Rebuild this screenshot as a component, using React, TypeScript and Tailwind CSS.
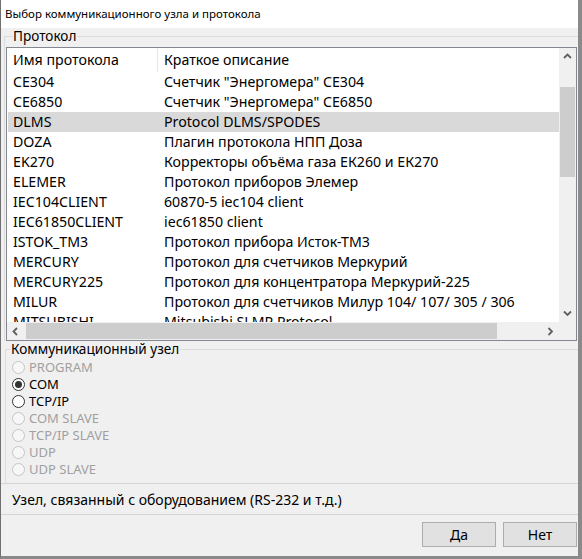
import type { ReactNode } from 'react';

type Protocol = { name: string; description: string };

const protocols: Protocol[] = [
  { name: 'CE304', description: 'Счетчик "Энергомера" CE304' },
  { name: 'CE6850', description: 'Счетчик "Энергомера" CE6850' },
  { name: 'DLMS', description: 'Protocol DLMS/SPODES' },
  { name: 'DOZA', description: 'Плагин протокола НПП Доза' },
  { name: 'EK270', description: 'Корректоры объёма газа ЕК260 и ЕК270' },
  { name: 'ELEMER', description: 'Протокол приборов Элемер' },
  { name: 'IEC104CLIENT', description: '60870-5 iec104 client' },
  { name: 'IEC61850CLIENT', description: 'iec61850 client' },
  { name: 'ISTOK_TM3', description: 'Протокол прибора Исток-ТМ3' },
  { name: 'MERCURY', description: 'Протокол для счетчиков Меркурий' },
  { name: 'MERCURY225', description: 'Протокол для концентратора Меркурий-225' },
  { name: 'MILUR', description: 'Протокол для счетчиков Милур 104/ 107/ 305 / 306' },
  { name: 'MITSUBISHI', description: 'Mitsubishi SLMP Protocol' },
];

const nodes = [
  { label: 'PROGRAM', enabled: false },
  { label: 'COM', enabled: true },
  { label: 'TCP/IP', enabled: true },
  { label: 'COM SLAVE', enabled: false },
  { label: 'TCP/IP SLAVE', enabled: false },
  { label: 'UDP', enabled: false },
  { label: 'UDP SLAVE', enabled: false },
];

/* Small scrollbar arrow, drawn as a chevron */
function Arrow({ dir }: { dir: 'up' | 'down' | 'left' | 'right' }) {
  const pts = {
    up: '1,6 4.5,2.5 8,6',
    down: '1,2.5 4.5,6 8,2.5',
    left: '6,1 2.5,4.5 6,8',
    right: '2.5,1 6,4.5 2.5,8',
  }[dir];
  return (
    <svg width="9" height="9" viewBox="0 0 9 9">
      <polyline points={pts} fill="none" stroke="#606060" strokeWidth="1.8" />
    </svg>
  );
}

function GroupLabel({ children, left }: { children: ReactNode; left: string }) {
  return (
    <span className={`absolute -top-[9px] ${left} bg-[#f0f0f0] pr-[1px] text-[13.6px] leading-[16px] text-black`}>
      {children}
    </span>
  );
}

function Radio({ checked, enabled }: { checked: boolean; enabled: boolean }) {
  return (
    <span
      className={`w-[13px] h-[13px] rounded-full border flex items-center justify-center ${
        enabled ? 'border-[#333333] bg-white' : 'border-[#c5c5c5] bg-[#f7f7f7]'
      }`}
    >
      {checked && <span className="w-[7px] h-[7px] rounded-full bg-[#333333]" />}
    </span>
  );
}

export default function App() {
  const selected = 'DLMS';

  return (
    <div className="w-[582px] h-[559px] overflow-hidden bg-[#f0f0f0] border-l border-l-[#707070] border-r-[4px] border-r-[#8a8a8a] border-b-[3px] border-b-[#8a8a8a] flex flex-col font-['Noto_Sans',sans-serif] text-black">
      {/* Title bar */}
      <div className="h-[28px] shrink-0 bg-white flex items-center pl-[4px] text-[11.5px]">
        Выбор коммуникационного узла и протокола
      </div>

      {/* Protocol group */}
      <div className="relative mt-[8px] ml-[3px] border-t border-l border-[#dcdcdc] pt-[10px] pl-[1px]">
        <GroupLabel left="left-[8px]">Протокол</GroupLabel>

        <div className="w-[571px] h-[294px] border border-[#828790] bg-white grid grid-cols-[552px_17px] grid-rows-[274px_18px] text-[14.2px]">
          <div className="overflow-hidden">
            <div className="h-[24px] flex items-center">
              <div className="w-[151px] h-full pl-[6px] flex items-center border-r border-[#e5e5e5]">
                Имя протокола
              </div>
              <div className="pl-[6px]">Краткое описание</div>
            </div>
            {protocols.map((p) => (
              <div
                key={p.name}
                className={`h-[20px] flex items-center whitespace-nowrap ml-[1px] ${
                  p.name === selected ? 'bg-[#d9d9d9]' : ''
                }`}
              >
                <div className="w-[151px] pl-[5px]">{p.name}</div>
                <div className="pl-[5px]">{p.description}</div>
              </div>
            ))}
          </div>

          {/* Vertical scrollbar */}
          <div className="bg-[#f0f0f0] flex flex-col items-center">
            <div className="h-[17px] w-full flex items-center justify-center">
              <Arrow dir="up" />
            </div>
            <div className="flex-1 w-full px-[1px] pt-[22px]">
              <div className="h-[90px] bg-[#cdcdcd]" />
            </div>
            <div className="h-[17px] w-full flex items-center justify-center">
              <Arrow dir="down" />
            </div>
          </div>

          {/* Horizontal scrollbar */}
          <div className="bg-[#f0f0f0] flex items-center">
            <div className="w-[17px] h-full flex items-center justify-center">
              <Arrow dir="left" />
            </div>
            <div className="flex-1 h-full py-[1px] pl-[2px] pr-[45px]">
              <div className="h-full bg-[#cdcdcd]" />
            </div>
            <div className="w-[17px] h-full flex items-center justify-center">
              <Arrow dir="right" />
            </div>
          </div>
          <div className="bg-[#f0f0f0]" />
        </div>
      </div>

      {/* Communication node group */}
      <div className="relative mt-[8px] ml-[4px] border-t border-l border-[#dcdcdc] pt-[9px] pl-[6px] h-[134px]">
        <GroupLabel left="left-[5px]">Коммуникационный узел</GroupLabel>
        {nodes.map((n) => (
          <div key={n.label} className="h-[17px] flex items-center gap-[4px] text-[13px]">
            <Radio checked={n.label === 'COM'} enabled={n.enabled} />
            <span className={n.enabled ? 'text-black' : 'text-[#a0a0a0]'}>{n.label}</span>
          </div>
        ))}
      </div>

      {/* Node description */}
      <div className="h-[32px] shrink-0 border-t border-b border-[#d5d5d5] flex items-center pl-[11px] text-[14px]">
        Узел, связанный с оборудованием (RS-232 и т.д.)
      </div>

      {/* Dialog buttons */}
      <div className="flex-1 flex justify-end items-start gap-[7px] pt-[7px] pr-[1px] text-[14px]">
        <button className="w-[74px] h-[25px] border border-[#adadad] bg-[#e1e1e1]">Да</button>
        <button className="w-[74px] h-[25px] border border-[#adadad] bg-[#e1e1e1]">Нет</button>
      </div>
    </div>
  );
}
